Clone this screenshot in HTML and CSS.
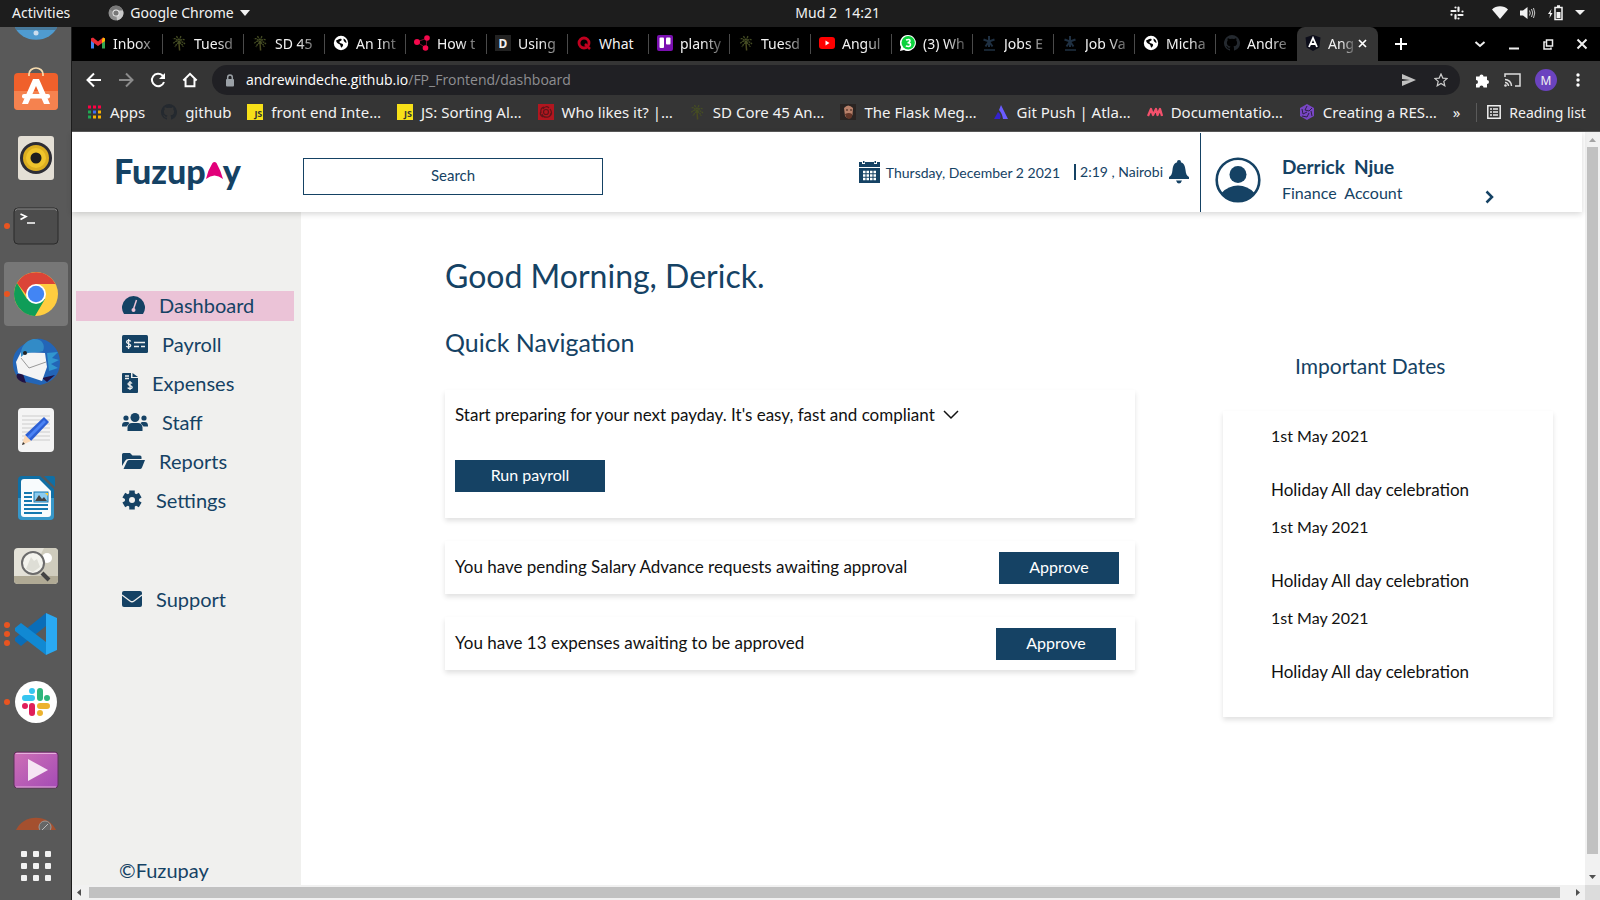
FILE: index.html
```html
<!DOCTYPE html>
<html lang="en">
<head>
<meta charset="utf-8">
<title>Fuzupay dashboard</title>
<link rel="stylesheet" href="styles.css">
</head>
<body>
<svg class="defs" aria-hidden="true">
  <symbol id="palm" viewBox="0 0 16 16"><path d="M8.600 15.500 8 8" stroke="#4a4a20" stroke-width="1.500" fill="none"/><path d="M8 8C6 5 4 6 2 9M8 8C6 4 4 3 2 4M8 8C8 4 6 2 5 1M8 8C9 4 9 3 10 1M8 8c2-4 4-4 6-3M8 8c3-2 4-1 6 1M8 8c2 0 4 2 4 4M8 8C6 8 5 10 4 12" stroke="#454d24" stroke-width="1.300" stroke-dasharray="2 .6" fill="none"/></symbol>
  <symbol id="globe" viewBox="0 0 16 16"><circle cx="8" cy="8" r="7.200" fill="#fff"/><path d="M3 5.500c2-.6 3.500-2.500 5.500-1.500.6 1.500-.6 2-1.800 2.400C5.500 7 7 8 8.500 8.500c2 .6 2.500 2-.3 4.200-.9-1.500-.4-2.600-1.600-3.400C5 8.500 3.500 8 3 5.500zM10.500 3.500c2 .6 3 2.500 3 4.500-1.500-.4-3.500-2-3-4.500z" fill="#000"/></symbol>
  <symbol id="gh" viewBox="0 0 16 16"><path fill="#24292f" d="M8 0a8 8 0 0 0-2.500 15.600c.4.1.5-.2.5-.4v-1.500c-2.200.5-2.700-.9-2.700-.9-.4-.9-.9-1.200-.9-1.200-.7-.5.1-.5.1-.5.8.1 1.200.8 1.200.8.7 1.200 1.900.9 2.300.7.1-.5.3-.9.5-1.100-1.800-.2-3.600-.9-3.600-3.900 0-.9.3-1.600.8-2.200-.1-.2-.4-1 .1-2.100 0 0 .7-.2 2.200.8a7.600 7.600 0 0 1 4 0c1.500-1 2.200-.8 2.200-.8.4 1.100.2 1.900.1 2.100.5.600.8 1.300.8 2.200 0 3.100-1.900 3.700-3.700 3.900.3.300.6.700.6 1.500v2.200c0 .2.100.5.500.4A8 8 0 0 0 8 0z"/></symbol>
  <symbol id="star" viewBox="0 0 16 16"><path d="M8 1v11M2.500 4.500 8 6.500l5.500-2M4.500 11.500 8 6.500l3.500 5" stroke="#1f3042" stroke-width="2" fill="none"/><path d="M3 15h11" stroke="#1f3042" stroke-width="1.500"/></symbol>
</svg>

<header class="system">
  <div class="system-left">
    <span>Activities</span>
    <span class="app-menu"><svg width="16" height="16" viewBox="0 0 16 16"><circle cx="8" cy="8" r="7.500" fill="#8e8e8e"/><path d="M8 8 1.500 4.500A7.500 7.500 0 0 1 14.800 5z" fill="#777"/><path d="M9 15.400A7.500 7.500 0 0 0 15 5.500H8z" fill="#c8c8c8"/><circle cx="8" cy="8" r="3.500" fill="#eee"/><circle cx="8" cy="8" r="2.600" fill="#777"/></svg>Google Chrome<svg width="10" height="6" viewBox="0 0 10 6"><path d="M0 0h10L5 6z" fill="#f2f2f2"/></svg></span>
  </div>
  <span>Mud 2&nbsp; 14:21</span>
  <div class="system-right">
    <svg class="tray-slack" width="14" height="14" viewBox="0 0 14 14" stroke="#f2f2f2" stroke-width="2.200" stroke-linecap="round"><path d="M5.500 1.500v0M1.500 5h4M8.500 1.500V5M12.500 5.500v0M12.500 9h-4M5.500 9v3.500M1.500 8.700v0M8.500 12.500v0"/></svg>
    <svg width="16" height="13" viewBox="0 0 16 13"><path d="M0 3.500C4-.8 12-.8 16 3.500L8 13z" fill="#f2f2f2"/></svg>
    <svg width="16" height="14" viewBox="0 0 16 14"><path d="M0 4.500h3L7.500 1v12L3 9.500H0z" fill="#f2f2f2"/><path d="M9.500 4.500q1.500 2.500 0 5M11.500 3q2.500 4 0 8M13.500 2q2.500 5 0 10" stroke="#ccc" fill="none"/></svg>
    <svg width="15" height="16" viewBox="0 0 15 16"><path d="M3.500 4 0 9h2l-.5 4L4.500 8h-2z" fill="#f2f2f2"/><path d="M7 2.500h7v12H7zM9 1h3" stroke="#f2f2f2" stroke-width="1.500" fill="none"/><path d="M8.500 7h4v6h-4z" fill="#f2f2f2"/></svg>
    <svg width="10" height="5" viewBox="0 0 10 5"><path d="M0 0h10L5 5z" fill="#f2f2f2"/></svg>
  </div>
</header>

<div class="desktop">
<nav class="dock" aria-label="Dock">
  <div class="dock-top"><svg width="44" height="17" viewBox="0 0 44 17"><path d="M1 0a22 18 0 0 0 42 0z" fill="#4f9bd0"/><path d="M1 0h42l-1 3H2z" fill="#47799b"/><circle cx="22" cy="6" r="2.500" fill="#cde"/></svg></div>
  <div class="dock-item"><svg width="46" height="46" viewBox="0 0 46 46"><rect x="1" y="6" width="44" height="37" rx="4" fill="#f0602b"/><path d="M1 24h44v15a4 4 0 0 1-4 4H5a4 4 0 0 1-4-4z" fill="#f5824f"/><path d="M16 9V7a7 6 0 0 1 14 0v2" stroke="#f8dcae" stroke-width="1.700" fill="none"/><path d="M20 12h6l11 25h-6l-8-18-8 18H9z" fill="#fff"/><rect x="9" y="27" width="28" height="4.500" rx="2" fill="#fff"/></svg></div>
  <div class="dock-item"><svg width="46" height="46" viewBox="0 0 46 46"><rect x="5" y="1" width="36" height="44" rx="3" fill="#e4dfd5"/><circle cx="23" cy="23" r="16" fill="#2d2d35"/><circle cx="23" cy="23" r="13" fill="#dcae21"/><circle cx="23" cy="23" r="10" fill="#f0c52c"/><circle cx="23" cy="23" r="5.500" fill="#1f1f1f"/></svg></div>
  <div class="dock-item"><i class="dot"></i><svg width="46" height="46" viewBox="0 0 46 46"><rect x="1" y="5" width="44" height="36" rx="4" fill="#4c4c4c" stroke="#2b2b2b"/><path d="M2.500 8a2 2 0 0 1 2-2h37a2 2 0 0 1 2 2" stroke="#888" fill="none"/><path d="m7.500 11 5.500 2.500-5.500 3M14 20h8" stroke="#fff" stroke-width="1.700" fill="none"/></svg></div>
  <div class="dock-item active"><i class="dot"></i><svg width="46" height="46" viewBox="0 0 46 46"><circle cx="23" cy="23" r="22" fill="#ffcd40"/><path d="M4 12a22 22 0 0 0 18 33l10-17H14z" fill="#0f9d58"/><path d="M4 12A22 22 0 0 1 42.500 13H23L13.500 24z" fill="#db4437"/><circle cx="23" cy="23" r="10" fill="#fff"/><circle cx="23" cy="23" r="8.200" fill="#4285f4"/></svg></div>
  <div class="dock-item"><svg width="48" height="48" viewBox="0 0 48 48"><path d="M24 1C33-1 48 8 48 24c0 14-9 21-20 23L10 43C4 39 0 31 1 22 2 13 9 7 15 5c2-3 6-4 9-4z" fill="#2365b7"/><path d="M5 36c-2 5 4 8 9 9l-3-9zM35 44l8-7-13 3z" fill="#211244"/><path d="m9 14 24 1 2 14-5 14L6 35 4 24z" fill="#f4f4f4"/><path d="m9 20 8 10 17-6" stroke="#999" fill="none"/><path d="M9 19C8 8 14 3 21 1c8-1 13 5 10 12-7 3-15-1-22 6z" fill="#328bc7"/><path d="m35 15 11-1-6 6 7 2-8 4 7 4-9 3" fill="#3196cf"/><circle cx="13" cy="15" r="2" fill="#222"/></svg></div>
  <div class="dock-item"><svg width="46" height="46" viewBox="0 0 46 46"><rect x="5" y="1" width="36" height="44" rx="4" fill="#f4f4f4"/><path d="M9 9h28M9 13h28M9 17h28M9 21h28M9 25h28M9 29h28M9 33h28" stroke="#ccc"/><path d="m31 10 5 5-18 19-6-6z" fill="#2c5fd3"/><path d="m31 13 2 2-17 17-2-2z" fill="#4b83f5"/><path d="m12 28 6 6-9 4z" fill="#fbd8b5"/><path d="m9 38 1-3 2 2z" fill="#333"/></svg></div>
  <div class="dock-item"><svg width="46" height="46" viewBox="0 0 46 46"><path d="M9 1h18l14 13v27a4 4 0 0 1-4 4H9a4 4 0 0 1-4-4V5a4 4 0 0 1 4-4z" fill="#106fa5"/><path d="M5 23h36v18a4 4 0 0 1-4 4H9a4 4 0 0 1-4-4z" fill="#3797c9"/><path d="M11 4h15l12 12v23a3 3 0 0 1-3 3H11a3 3 0 0 1-3-3V7a3 3 0 0 1 3-3z" fill="#f8fbfd"/><path d="M31 1h9a2 2 0 0 1 2 2v9z" fill="#106fa5"/><path d="M11 18h8M11 22h8M11 26h8M11 30h24M11 34h24M11 38h18" stroke="#1478b0" stroke-width="2"/><rect x="21" y="17" width="14" height="10" fill="#8acbf0" stroke="#1478b0"/><path d="m22 26 4-6 3 4 2-2 3 4z" fill="#444"/><path d="M32 18h3v3z" fill="#ffca28"/></svg></div>
  <div class="dock-item"><svg width="46" height="46" viewBox="0 0 46 46"><rect x="1" y="5" width="44" height="36" rx="4" fill="#e4e2d8"/><path d="M31 5h10a4 4 0 0 1 4 4v24H17z" fill="#cfccbd"/><path d="M1 33h44v4a4 4 0 0 1-4 4H5a4 4 0 0 1-4-4z" fill="#b0aa95"/><circle cx="34" cy="15" r="5" fill="#fff"/><circle cx="20" cy="20" r="11" fill="#f3f3ed" stroke="#6b6b6b" stroke-width="2"/><path d="m13 26 5-12 3 4 3-2 3 8-7 5z" fill="#deded6"/><path d="m29 30 7 7" stroke="#444" stroke-width="4"/></svg></div>
  <div class="dock-item"><i class="dot dots"></i><svg width="46" height="46" viewBox="0 0 46 46"><path d="M33 2v13L8 35l-6-5v-3z" fill="#0a6db8"/><path d="M33 44V31L8 12l-6 5v3z" fill="#1189d3"/><path d="m33 2 11 5v32l-11 5z" fill="#2aa9f2"/></svg></div>
  <div class="dock-item"><i class="dot"></i><svg width="46" height="46" viewBox="0 0 46 46"><circle cx="23" cy="23" r="21" fill="#fff"/><g stroke-width="6" stroke-linecap="round"><path d="M12 19h7M19 12v0" stroke="#36c5f0"/><path d="M27 12v7M34 19v0" stroke="#2eb67d"/><path d="M34 27h-7M27 34v0" stroke="#ecb22e"/><path d="M19 27v7M12 27v0" stroke="#e01e5a"/></g></svg></div>
  <div class="dock-item"><svg width="46" height="46" viewBox="0 0 46 46"><defs><linearGradient id="vid" x2="1" y2="1"><stop stop-color="#ce70b6"/><stop offset="1" stop-color="#a44bb5"/></linearGradient></defs><rect x="1" y="5" width="44" height="36" rx="3" fill="url(#vid)" stroke="#5b3358"/><path d="M3 6.500h40M3 40h40" stroke="#e5b0dc"/><path d="M15 12l20 11-20 11z" fill="#f5e5f3"/></svg></div>
  <div class="dock-cut"><svg width="40" height="14" viewBox="0 0 40 14"><path d="M0 14a22 21 0 0 1 40 0z" fill="#a4502f"/><circle cx="29" cy="11" r="6" fill="#666" stroke="#999"/><path d="m26 14 6-6" stroke="#bbb"/></svg></div>
  <div class="dock-apps"><svg width="30" height="30" viewBox="0 0 30 30" fill="#f1f1f1"><rect width="6" height="6" rx="1"/><rect x="12" width="6" height="6" rx="1"/><rect x="24" width="6" height="6" rx="1"/><rect y="12" width="6" height="6" rx="1"/><rect x="12" y="12" width="6" height="6" rx="1"/><rect x="24" y="12" width="6" height="6" rx="1"/><rect y="24" width="6" height="6" rx="1"/><rect x="12" y="24" width="6" height="6" rx="1"/><rect x="24" y="24" width="6" height="6" rx="1"/></svg></div>
</nav>

<div class="browser">
  <div class="tabs">
    <div class="tab"><svg class="fav" viewBox="0 0 16 16"><path d="M1 3v10.500h3V7z" fill="#4285f4"/><path d="M15 3v10.500h-3V7z" fill="#34a853"/><path d="M1 3.500 3 2.500l5 4 5-4 2 1V6l-7 5-7-5z" fill="#ea2b35"/><path d="m12 5 1-2.500 2 1V6l-3 2z" fill="#fbbc04"/></svg><span>Inbox</span></div>
    <div class="tab"><svg class="fav"><use href="#palm"/></svg><span>Tuesd</span></div>
    <div class="tab"><svg class="fav"><use href="#palm"/></svg><span>SD 45</span></div>
    <div class="tab"><svg class="fav"><use href="#globe"/></svg><span>An Int</span></div>
    <div class="tab"><svg class="fav" viewBox="0 0 16 16"><path d="m3 7 10-4-1 10z" stroke="#7b1230" fill="none"/><circle cx="3" cy="7" r="3" fill="#f5084c"/><circle cx="13" cy="3" r="2.800" fill="#f5084c"/><circle cx="11.500" cy="13" r="2.800" fill="#f5084c"/></svg><span>How t</span></div>
    <div class="tab"><span class="fav fav-d">D</span><span>Using</span></div>
    <div class="tab"><svg class="fav" viewBox="0 0 16 16"><circle cx="8" cy="8" r="5" stroke="#c1001f" stroke-width="2.800" fill="none"/><path d="m9 9 5 5" stroke="#c1001f" stroke-width="2.500"/></svg><span class="whole">What</span></div>
    <div class="tab"><svg class="fav" viewBox="0 0 16 16"><rect width="16" height="16" rx="2" fill="#7a0fb0"/><rect x="2.500" y="2.500" width="4.500" height="10.500" rx="1" fill="#fff"/><rect x="9" y="2.500" width="4.500" height="7" rx="1" fill="#fff"/></svg><span>planty</span></div>
    <div class="tab"><svg class="fav"><use href="#palm"/></svg><span>Tuesd</span></div>
    <div class="tab"><svg class="fav" viewBox="0 0 16 16"><rect y="2" width="16" height="12" rx="3" fill="#f00"/><path d="M6.500 5.500v5l4-2.500z" fill="#fff"/></svg><span>Angul</span></div>
    <div class="tab"><svg class="fav" viewBox="0 0 16 16"><path d="M8 0a8 8 0 1 1-4 15L0 16l1-4A8 8 0 0 1 8 0z" fill="#fff"/><circle cx="8.200" cy="7.800" r="6.700" fill="#0bd33c"/><path d="M6 5q4-1.500 4 .8 0 1.800-2.500 1.900 3 0 3 2.100 0 2.500-4.700 1.200" stroke="#fff" stroke-width="1.500" fill="none"/></svg><span>(3) Wh</span></div>
    <div class="tab"><svg class="fav"><use href="#star"/></svg><span>Jobs E</span></div>
    <div class="tab"><svg class="fav"><use href="#star"/></svg><span>Job Va</span></div>
    <div class="tab"><svg class="fav"><use href="#globe"/></svg><span>Micha</span></div>
    <div class="tab"><svg class="fav"><use href="#gh"/></svg><span>Andre</span></div>
    <div class="tab current"><svg class="fav" viewBox="0 0 16 16"><path d="M8 0 15.500 2.500 14.300 12.500 8 16 1.700 12.500.5 2.500z" fill="#0c0d1a"/><path d="m4 12 4-9 4 9M5.500 9h5" stroke="#fff" stroke-width="1.800" fill="none"/></svg><span>Ang</span><button class="ic" aria-label="Close tab"><svg width="9" height="9" viewBox="0 0 9 9"><path d="m1 1 7 7M8 1 1 8" stroke="#fff" stroke-width="1.700"/></svg></button></div>
    <button class="ic new-tab" aria-label="New tab"><svg width="12" height="12" viewBox="0 0 12 12"><path d="M6 0v12M0 6h12" stroke="#fff" stroke-width="2"/></svg></button>
    <div class="window-buttons">
      <button class="ic" aria-label="Search tabs"><svg width="12" height="12" viewBox="0 0 12 12"><path d="m1.500 4 4.500 4 4.500-4" stroke="#eee" stroke-width="2" fill="none"/></svg></button>
      <button class="ic" aria-label="Minimise"><svg width="12" height="12" viewBox="0 0 12 12"><path d="M1 10.500h10" stroke="#eee" stroke-width="2"/></svg></button>
      <button class="ic" aria-label="Restore"><svg width="12" height="12" viewBox="0 0 12 12"><path d="M4.500 2h6v6h-6zM3.500 4H2v7h7V9.500" stroke="#eee" stroke-width="1.500" fill="none"/></svg></button>
      <button class="ic" aria-label="Close"><svg width="12" height="12" viewBox="0 0 12 12"><path d="m1.500 1.500 9 9M10.500 1.500l-9 9" stroke="#eee" stroke-width="2"/></svg></button>
    </div>
  </div>

  <div class="toolbar">
    <div class="nav-buttons">
      <button class="ic" aria-label="Back"><svg width="16" height="16" viewBox="0 0 16 16"><path d="M15 8H2M8 1.500 1.500 8 8 14.500" stroke="#fff" stroke-width="2" fill="none"/></svg></button>
      <button class="ic" aria-label="Forward"><svg width="16" height="16" viewBox="0 0 16 16"><path d="M1 8h13M8 1.500 14.500 8 8 14.500" stroke="#8b8b8b" stroke-width="2" fill="none"/></svg></button>
      <button class="ic" aria-label="Reload"><svg width="16" height="16" viewBox="0 0 16 16"><path d="M14 10a6.200 6.200 0 1 1-1.500-6.500L14 5" stroke="#fff" stroke-width="2" fill="none"/><path d="M15 1v6H9z" fill="#fff"/></svg></button>
      <button class="ic" aria-label="Home"><svg width="16" height="16" viewBox="0 0 18 18"><path d="M1.500 9.500 9 2l7.500 7.500M4 8v8h10V8" stroke="#fff" stroke-width="2.200" fill="none"/></svg></button>
    </div>
    <div class="address">
      <svg width="10" height="13" viewBox="0 0 10 13"><rect x="1" y="5" width="8" height="7.500" rx="1" fill="#9aa0a6"/><path d="M2.700 6V3.200a2.300 2.300 0 0 1 4.600 0V6" stroke="#9aa0a6" stroke-width="1.500" fill="none"/></svg>
      <span class="url"><b>andrewindeche.github.io</b>/FP_Frontend/dashboard</span>
      <button class="ic" aria-label="Share"><svg width="14" height="12" viewBox="0 0 14 12"><path d="M0 0 14 6 0 12V7l8-1-8-1z" fill="#c0c0c0"/></svg></button>
      <button class="ic" aria-label="Bookmark"><svg width="14" height="14" viewBox="0 0 14 14"><path d="m7 1 1.800 4.100 4.300.4-3.300 2.900 1 4.400L7 10.500l-3.800 2.300 1-4.400L.9 5.500l4.300-.4z" stroke="#ccc" stroke-width="1.200" fill="none"/></svg></button>
    </div>
    <div class="extensions">
      <button class="ic" aria-label="Extensions"><svg width="15" height="15" viewBox="0 0 15 15"><path d="M1 3.500h3.500a2 2 0 1 1 4 0H12V7a2 2 0 1 1 0 4v3.500H8.500a2 2 0 0 0-4 0H1V11a2 2 0 0 0 0-4z" fill="#fff"/></svg></button>
      <button class="ic" aria-label="Cast"><svg width="17" height="14" viewBox="0 0 17 14"><path d="M1 4V1h15v12h-5M1 6.500A6.500 6.500 0 0 1 7.500 13M1 9.500A3.500 3.500 0 0 1 4.500 13" stroke="#ddd" stroke-width="1.500" fill="none"/><circle cx="1.500" cy="12.500" r="1.300" fill="#ddd"/></svg></button>
      <button class="profile" aria-label="Profile">M</button>
      <button class="ic" aria-label="Menu"><svg width="4" height="14" viewBox="0 0 4 14" fill="#fff"><circle cx="2" cy="2" r="1.700"/><circle cx="2" cy="7" r="1.700"/><circle cx="2" cy="12" r="1.700"/></svg></button>
    </div>
  </div>

  <nav class="bookmarks" aria-label="Bookmarks">
    <a href="#"><svg class="fav" viewBox="0 0 16 16"><path d="M2 3h3M7 3h3M12 3h3" stroke="#f04" stroke-width="3"/><path d="M2 8h3M2 13h3" stroke="#1faa53" stroke-width="3"/><path d="M7 8h3" stroke="#3f6df5" stroke-width="3"/><path d="M7 13h3M12 8h3M12 13h3" stroke="#fbb300" stroke-width="3"/></svg>Apps</a>
    <a href="#"><svg class="fav"><use href="#gh"/></svg>github</a>
    <a href="#"><span class="fav fav-js">JS</span>front end Inte…</a>
    <a href="#"><span class="fav fav-js">JS</span>JS: Sorting Al…</a>
    <a href="#"><svg class="fav" viewBox="0 0 16 16"><path d="M0 0h16v16H0z" fill="#b1161f"/><g stroke="#5e1519" stroke-width="1.200" fill="none"><path d="M5 5q3-4 6-1M3 9q-1-5 3-6M5 13q-4-2-2-6M10 13q-5 1-6-3M13 9q-1 5-5 4M12 5q3 4 0 7"/><circle cx="8" cy="8" r="2.500"/></g></svg>Who likes it? |…</a>
    <a href="#"><svg class="fav"><use href="#palm"/></svg>SD Core 45 An…</a>
    <a href="#"><svg class="fav" viewBox="0 0 16 16"><path d="M0 0h16v16H0z" fill="#2a2422"/><path d="M4 4q4-5 9 0l-.5 7Q9 17 5 12z" fill="#b9816a"/><path d="M5 10q4-2 7 0v3q-3 4-6 0z" fill="#633628"/><path d="M6 6h2M10 6h2" stroke="#3a2018"/></svg>The Flask Meg…</a>
    <a href="#"><svg class="fav" viewBox="0 0 16 16"><path d="M5 8Q9 11 7 15H1z" fill="#3422cc"/><path d="M8 1 15 15H10Q9 9 6 6z" fill="#6a5cff"/></svg>Git Push | Atla…</a>
    <a href="#"><svg class="fav" viewBox="0 0 16 16"><path d="m1 12 3-7 2 6 3-6 1.500 6L13 5l2 7" stroke="#f4516c" stroke-width="2.300" stroke-linejoin="round" fill="none"/></svg>Documentatio…</a>
    <a href="#"><svg class="fav" viewBox="0 0 16 16"><path d="m8 0 7 4v8l-7 4-7-4V4z" fill="#7846c4"/><path d="m8 2-2 4 4 1 3-3M3 5l1 5 4-2M3 12l5 1 2-4M13 12l-1-5" stroke="#2e2145" fill="none"/></svg>Creating a RES…</a>
    <span class="more">»</span>
    <button class="reading"><svg width="14" height="14" viewBox="0 0 14 14"><path d="M.8.8h12.400v12.400H.8z" stroke="#eee" stroke-width="1.500" fill="none"/><path d="M3 4h2M6 4h5M3 7h2M6 7h5M3 10h2M6 10h5" stroke="#eee" stroke-width="1.500"/></svg>Reading list</button>
  </nav>

  <div class="viewport">
    <div class="page">
      <header class="top">
        <a class="logo" href="#" aria-label="Fuzupay">Fuzup<svg width="17" height="17" viewBox="0 0 17 17"><path d="M6.500 1q2-2 4 0Q15 9 17 17q-8.500-7-17 0Q2 8 6.500 1z" fill="#e2007a"/></svg>y</a>
        <input class="search" type="search" placeholder="Search" aria-label="Search">
        <div class="when">
          <svg width="21" height="22" viewBox="0 0 21 22" fill="#154264"><path d="M0 1h3v2h3V1h9v2h3V1h3v5H0zM0 7h21v15H0z"/><path d="M4 0h1.500v2H4zM15.500 0H17v2h-1.500z"/><g stroke="#fff" stroke-width="2.300" stroke-dasharray="2.500 1"><path d="M4 11h13.500M4 14.500h13.500M4 18h13.500"/></g></svg>
          <span class="date">Thursday, December 2 2021</span>
          <span class="time">2:19 , Nairobi</span>
          <svg width="20" height="24" viewBox="0 0 20 24" fill="#154264"><circle cx="10" cy="2" r="2"/><path d="M10 2c5 0 6 4 6.500 8 .4 4 1.500 6 3.500 7v2H0v-2c2-1 3.100-3 3.500-7C4 6 5 2 10 2zM7 20.500h6q-1 3-3 3t-3-3z"/></svg>
        </div>
        <div class="account">
          <svg width="46" height="46" viewBox="0 0 46 46"><circle cx="23" cy="23" r="21.300" fill="#fff" stroke="#154264" stroke-width="2.600"/><circle cx="23" cy="17.500" r="8.500" fill="#154264"/><path d="M6.500 36q7-7.500 16.500-7.500T39.500 36Q33 44.500 23 44.500T6.500 36z" fill="#154264"/></svg>
          <div class="who"><strong>Derrick&nbsp; Njue</strong><span>Finance&nbsp; Account</span></div>
          <button class="ic chevron" aria-label="Account menu"><svg width="9" height="14" viewBox="0 0 9 14"><path d="m1.500 1.500 5.500 5.500-5.500 5.500" stroke="#154264" stroke-width="2.500" fill="none"/></svg></button>
        </div>
      </header>

      <div class="body">
        <nav class="side" aria-label="Main">
          <a class="on" href="#"><svg width="23" height="18" viewBox="0 0 23 18"><path d="M2 18a11.500 11.500 0 1 1 19 0z" fill="#154264"/><path d="m14.500 4-3 9" stroke="#ebc3d7" stroke-width="1.500"/><circle cx="11.500" cy="14" r="2" fill="#ebc3d7"/></svg>Dashboard</a>
          <a href="#"><svg width="26" height="18" viewBox="0 0 26 18"><rect width="26" height="18" rx="1.500" fill="#154264"/><path d="M8.700 6.500C8 5 4.500 5 4.500 7s4.200 1.700 4.200 3.500-3.500 2-4.400.5M6.600 4v10M12 7.500h11M12 11.500h5M19 11.500h4" stroke="#f0f0ee" stroke-width="1.300" fill="none"/></svg>Payroll</a>
          <a href="#"><svg width="16" height="20" viewBox="0 0 16 20"><path d="M0 1a1 1 0 0 1 1-1h8v5h7v14a1 1 0 0 1-1 1H1a1 1 0 0 1-1-1zM10.500 0 16 4h-5.500z" fill="#154264"/><path d="M3 3h4M3 5.500h4M10 10.500c-.8-1.500-4-1.200-4 .6s4.200 1.400 4.200 3.100-3.600 1.900-4.500.4M8 8v9" stroke="#f0f0ee" stroke-width="1.300" fill="none"/></svg>Expenses</a>
          <a href="#"><svg width="26" height="18" viewBox="0 0 26 18" fill="#154264"><circle cx="13" cy="4.500" r="4.500"/><circle cx="4" cy="5" r="2.600"/><circle cx="22" cy="5" r="2.600"/><path d="M5.500 18v-3.500A4.500 4.500 0 0 1 10 10h6a4.500 4.500 0 0 1 4.500 4.500V18zM0 12.500C0 10 1.500 9 3 9h3l1.500 1-3 3.500H0zM26 12.500C26 10 24.500 9 23 9h-3l-1.500 1 3 3.500H26z"/></svg>Staff</a>
          <a href="#"><svg width="23" height="16" viewBox="0 0 23 16" fill="#154264"><path d="M0 13V1.500A1.500 1.500 0 0 1 1.500 0H8l2.500 2.500H18A1.500 1.500 0 0 1 19.500 4v2H6Q4 6 3 8z"/><path d="M1.500 16 5 8.500Q5.500 7 7 7h16l-3 7.500q-.7 1.500-2 1.500z"/></svg>Reports</a>
          <a href="#"><svg width="20" height="20" viewBox="0 0 20 20"><g stroke="#154264" stroke-width="5.500"><path d="M10 .5v19M1.800 5.200l16.400 9.600M18.200 5.200 1.800 14.800"/></g><circle cx="10" cy="10" r="7.200" fill="#154264"/><circle cx="10" cy="10" r="3" fill="#f0f0ee"/></svg>Settings</a>
          <a class="support" href="#"><svg width="20" height="16" viewBox="0 0 20 16"><rect width="20" height="16" rx="2" fill="#154264"/><path d="m0 4 8 6q2 1.500 4 0l8-6" stroke="#f0f0ee" stroke-width="1.300" fill="none"/></svg>Support</a>
          <p class="copyright">©Fuzupay</p>
        </nav>

        <main class="content">
          <div class="work">
            <h1>Good Morning, Derick.</h1>
            <h2>Quick Navigation</h2>
            <section class="card payday">
              <p>Start preparing for your next payday. It's easy, fast and compliant <svg width="16" height="10" viewBox="0 0 16 10"><path d="m1 1 7 7 7-7" stroke="#111" stroke-width="1.500" fill="none"/></svg></p>
              <button class="primary wide">Run payroll</button>
            </section>
            <section class="card row advance"><p>You have pending Salary Advance requests awaiting approval</p><button class="primary">Approve</button></section>
            <section class="card row expenses"><p>You have 13 expenses awaiting to be approved</p><button class="primary">Approve</button></section>
          </div>
          <aside class="dates">
            <h3>Important Dates</h3>
            <dl class="card">
              <dt>1st May 2021</dt><dd>Holiday All day celebration</dd>
              <dt>1st May 2021</dt><dd>Holiday All day celebration</dd>
              <dt>1st May 2021</dt><dd>Holiday All day celebration</dd>
            </dl>
          </aside>
        </main>
      </div>
    </div>
    <div class="vbar"><svg width="7" height="4" viewBox="0 0 7 4"><path d="M0 4h7L3.500 0z" fill="#a3a3a3"/></svg><i></i><svg width="7" height="4" viewBox="0 0 7 4"><path d="M0 0h7L3.500 4z" fill="#505050"/></svg></div>
    <div class="hbar"><svg width="4" height="7" viewBox="0 0 4 7"><path d="M4 0v7L0 3.500z" fill="#505050"/></svg><i></i><svg width="4" height="7" viewBox="0 0 4 7"><path d="M0 0v7l4-3.500z" fill="#505050"/></svg></div>
    <div class="corner"></div>
  </div>
</div>
</div>
</body>
</html>
```

FILE: styles.css
```css
* { box-sizing: border-box; }
body {
  margin: 0;
  height: 100vh;
  display: flex;
  flex-direction: column;
  overflow: hidden;
  font-family: "Noto Sans", "Open Sans", sans-serif;
  font-size: 14px;
  color: #f2f2f2;
  background: #1d1d1d;
}
svg { flex: none; display: block; }
h1, h2, h3, p, dl, dd { margin: 0; font-weight: 400; }
a { color: inherit; text-decoration: none; }
button { font: inherit; color: inherit; border: 0; padding: 0; background: none; }
.ic { display: grid; place-items: center; flex: none; }
.defs { position: absolute; width: 0; height: 0; }
.fav { width: 16px; height: 16px; flex: none; }

/* System bar */
.system {
  flex: none;
  height: 27px;
  display: grid;
  grid-template-columns: 10fr auto 9fr;
  align-items: center;
  padding: 0 15px 2px 12px;
}
.system-left, .system-right, .app-menu { display: flex; align-items: center; }
.system-left { gap: 38px; }
.app-menu { gap: 6px; }
.system-right { justify-content: flex-end; gap: 12px; }
.tray-slack { margin-right: 16px; }

.desktop { flex: 1; min-height: 0; display: flex; }

/* Dock */
.dock {
  flex: none;
  width: 72px;
  display: flex;
  flex-direction: column;
  background: #595959;
  border-right: 1px solid #1c1c1c;
}
.dock-top { height: 29px; flex: none; display: flex; justify-content: center; }
.dock-item {
  position: relative;
  height: 64px;
  margin: 2px 3px 2px 4px;
  flex: none;
  display: grid;
  place-items: center;
  border-radius: 4px;
}
.dock-item.active { background: #777; }
.dot {
  position: absolute;
  left: 0;
  top: 29px;
  width: 6px;
  height: 6px;
  border-radius: 50%;
  background: #e95420;
}
.dots { box-shadow: 0 -9px #e95420, 0 9px #e95420; }
.dock-cut { flex: 1; display: flex; justify-content: center; padding-top: 12px; }
.dock-apps { flex: none; height: 68px; display: grid; place-items: center; }

/* Browser chrome */
.browser { flex: 1; min-width: 0; display: flex; flex-direction: column; background: #353535; }
.tabs { flex: none; height: 34px; display: flex; align-items: stretch; padding-left: 10px; background: #000; }
.tab {
  flex: 0 1 81px;
  min-width: 0;
  display: flex;
  align-items: center;
  gap: 7px;
  padding: 0 4px 2px 8px;
  position: relative;
}
.tab::after { content: ""; position: absolute; right: 0; top: 7px; bottom: 7px; width: 1px; background: #4a4a4a; }
.tab:nth-child(15)::after, .tab.current::after { display: none; }
.tab > span:not(.fav) {
  flex: 1;
  white-space: nowrap;
  mask-image: linear-gradient(90deg, #000 50%, rgba(0, 0, 0, .15));
}
.tab > span.whole { mask-image: none; }
.tab.current { background: #353535; border-radius: 8px 8px 0 0; }
.tab.current .ic { margin: 0 7px 0 -4px; }
.fav-d { display: grid; place-items: center; background: #222; font-size: 12px; font-weight: 700; }
.new-tab { margin-left: 17px; }
.window-buttons { margin-left: auto; display: flex; align-items: center; gap: 22px; padding-right: 12px; }

.toolbar { flex: none; height: 38px; display: flex; align-items: center; padding: 0 20px 0 14px; }
.nav-buttons { display: flex; align-items: center; gap: 16px; margin-right: 14px; }
.address {
  flex: 1;
  height: 30px;
  display: flex;
  align-items: center;
  gap: 11px;
  padding: 0 12px 0 13px;
  border-radius: 15px;
  background: #202024;
}
.url { flex: 1; padding-bottom: 2px; color: #8f8f92; font-family: "Open Sans", sans-serif; }
.url b { font-weight: 400; color: #fff; }
.address .ic + .ic { margin-left: 7px; }
.extensions { display: flex; align-items: center; gap: 14px; margin-left: 15px; }
.extensions .ic:last-child { margin-left: 5px; }
.profile { width: 22px; height: 22px; border-radius: 50%; background: #6b43bf; font-size: 12px; }

.bookmarks {
  flex: none;
  height: 33px;
  display: flex;
  align-items: center;
  justify-content: space-between;
  padding: 0 14px 6px;
  border-bottom: 1px solid #5a5a5a;
  font-size: 15px;
  white-space: nowrap;
}
.bookmarks a, .reading { display: flex; align-items: center; gap: 8px; }
.fav-js { background: #f7e018; color: #333; font-size: 9px; font-weight: 700; line-height: 20px; text-align: right; padding-right: 1px; }
.reading { border-left: 1px solid #5a5a5a; padding-left: 10px; font-size: 14px; }

/* Viewport and scrollbars */
.viewport { flex: 1; min-height: 0; display: grid; grid-template: minmax(0, 1fr) 15px / minmax(0, 1fr) 15px; }
.vbar, .hbar { background: #f1f1f1; display: flex; align-items: center; justify-content: space-between; }
.corner { background: #dcdcdc; }
.vbar { flex-direction: column; padding: 6px 0; gap: 5px; }
.hbar { padding: 0 5px; gap: 8px; }
.vbar i, .hbar i { flex: 1; background: #c1c1c1; }
.vbar i { width: 11px; margin-bottom: 16px; }
.hbar i { height: 11px; margin-right: 8px; }

/* Dashboard page */
.page {
  display: flex;
  flex-direction: column;
  min-height: 0;
  background: #fff;
  color: #111;
  font-family: Lato, sans-serif;
  font-size: 16px;
}
.top {
  position: relative;
  flex: none;
  height: 80px;
  margin-right: 3px;
  display: flex;
  align-items: center;
  color: #154264;
  background: #fff;
  box-shadow: 0 2px 6px rgba(0, 0, 0, .16);
}
.logo { width: 189px; margin-left: 42px; padding-bottom: 3px; display: flex; align-items: center; font-size: 34px; font-weight: 900; line-height: 40px; }
.search {
  width: 300px;
  height: 37px;
  margin-top: 9px;
  padding: 0 0 3px;
  border: 1px solid #154264;
  background: #fff;
  font: 15px Lato, sans-serif;
  text-align: center;
}
.search::placeholder { color: #154264; opacity: 1; }
.search::-webkit-search-cancel-button { display: none; }
.when { margin-left: auto; display: flex; align-items: center; gap: 6px; font-size: 14px; white-space: nowrap; }
.time { margin-left: 8px; padding-left: 4px; line-height: 16px; border-left: 2px solid #154264; }
.account {
  width: 382px;
  height: 79px;
  margin: 1px 0 0 11px;
  padding-left: 14px;
  display: flex;
  align-items: center;
  border-left: 1px solid #154264;
}
.account > svg { margin-top: 14px; }
.who { width: 203px; margin: 14px 0 0 21px; display: flex; flex-direction: column; line-height: 26px; }
.who strong { font-size: 19px; font-weight: 700; }
.chevron { margin-top: 48px; }

.body { flex: 1; min-height: 0; display: flex; }
.side {
  flex: none;
  width: 229px;
  padding: 79px 7px 0 4px;
  display: flex;
  flex-direction: column;
  gap: 9px;
  color: #154264;
  background: #f0f0ee;
  font-size: 20px;
}
.side a { height: 30px; display: flex; align-items: center; gap: 14px; padding: 0 0 3px 46px; }
.side .on { background: #ebc3d7; }
.support { margin-top: 60px; }
.copyright { margin: auto 0 0 43px; line-height: 30px; }

.content {
  flex: 1;
  min-width: 0;
  display: grid;
  grid-template-columns: minmax(0, 1fr) 330px;
  column-gap: 88px;
  padding: 44px 32px 0 144px;
}
h1, h2, h3 { color: #154264; }
h1 { font-size: 32px; line-height: 40px; }
h2 { font-size: 25px; line-height: 30px; margin: 31px 0 33px; }
h3 { font-size: 21px; line-height: 24px; margin: 98px 0 33px 72px; }
.card { background: #fff; box-shadow: 0 3px 5px rgba(0, 0, 0, .12); }
.card p, .card dd { font-size: 17px; }
.payday { height: 128px; padding: 15px 10px; }
.payday p { display: flex; align-items: center; gap: 8px; line-height: 20px; margin-bottom: 35px; }
.row { height: 53px; margin-top: 23px; padding: 0 16px 0 10px; display: flex; align-items: center; justify-content: space-between; }
.row p { padding-bottom: 2px; }
.expenses { padding-right: 19px; }
.primary { width: 120px; height: 32px; padding-bottom: 3px; background: #154264; color: #fff; }
.wide { width: 150px; display: block; }
.dates dl { padding: 15px 48px 35px; line-height: 20px; }
.dates dt { margin-bottom: 34px; }
.dates dd + dt { margin-top: 17px; }
```
